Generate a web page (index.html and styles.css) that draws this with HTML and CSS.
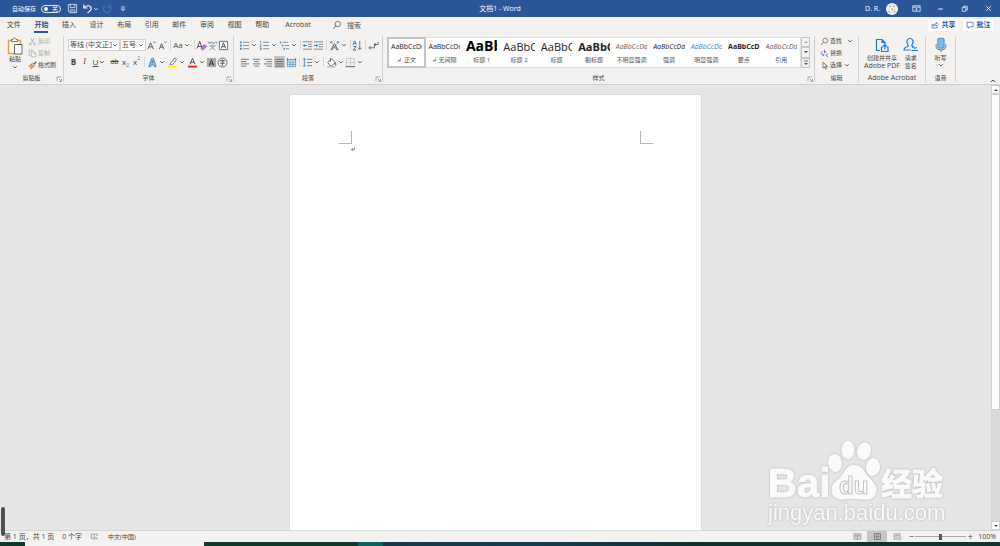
FILE: index.html
```html
<!DOCTYPE html>
<html lang="zh-CN">
<head>
    <meta charset="UTF-8">
    <title>文档1 - Word</title>
    <link rel="stylesheet" href="styles.css">
</head>
<body>
    <!-- 图标 -->
    <svg class="sprite" aria-hidden="true">
        <symbol id="caret" viewBox="0 0 6 6"><path d="M1.200 2.200L3 4l1.800-1.800" fill="none" stroke="currentColor" stroke-width=".8"/></symbol>
        <symbol id="launcher" viewBox="0 0 6 6"><path d="M1 5V1h4M3 3l2 2M5.500 3v2.500H3" fill="none" stroke="#777" stroke-width=".6"/></symbol>
        <symbol id="save" viewBox="0 0 12 12"><path d="M1.500 1.500h9v9H3l-1.500-1.500zM3.500 1.500v3.500h5v-3.500M3.500 10.500v-3h5v3M5.500 8.500v2" fill="none" stroke="#dce6f5" stroke-width=".9"/></symbol>
        <symbol id="undo" viewBox="0 0 12 12"><path d="M2 1.500v4h4M2 5.500C4 2 10 2 10 6c0 2-2 3.500-4 5" fill="none" stroke="currentColor" stroke-width="1.200"/></symbol>
        <symbol id="redo" viewBox="0 0 12 12"><path d="M9 1.500v3H6M3.500 3A4 4 0 1 0 9 4.500" fill="none" stroke="currentColor" stroke-width="1.200"/></symbol>
        <symbol id="custom" viewBox="0 0 6 6"><path d="M1 1h4M1.200 3l1.800 1.800L4.800 3z" fill="none" stroke="#fff" stroke-width=".7"/></symbol>
        <symbol id="display" viewBox="0 0 12 12"><path d="M2 3h8v6H2zM2 4.500h8M6 8.500V5.800M4.800 7L6 5.800 7.200 7" fill="none" stroke="#fff" stroke-width=".8"/></symbol>
        <symbol id="min" viewBox="0 0 12 12"><path d="M3.500 6.500h5" stroke="#fff"/></symbol>
        <symbol id="restore" viewBox="0 0 12 12"><path d="M3.500 5h4v4h-4zM5 5V3.500h4v4H7.500" fill="none" stroke="#fff" stroke-width=".8"/></symbol>
        <symbol id="close" viewBox="0 0 12 12"><path d="M3.500 3.500l5 5M8.500 3.500l-5 5" stroke="#fff" stroke-width=".9"/></symbol>
        <symbol id="search" viewBox="0 0 12 12"><circle cx="7" cy="4.800" r="3.200" fill="none" stroke="#555" stroke-width=".9"/><path d="M4.800 7L1.500 10.500" stroke="#555"/></symbol>
        <symbol id="share" viewBox="0 0 12 12"><path d="M4 5H1.500v5.500h8V8M4 8c0-3 2-4 4-4V2l3 3-3 3V6C6.500 6 5 6.500 4 8z" fill="none" stroke="#2b579a"/></symbol>
        <symbol id="comment" viewBox="0 0 12 12"><path d="M1.500 2h9v6.500H6L3.500 11V8.500h-2z" fill="none" stroke="#2b579a"/></symbol>
        <symbol id="paste" viewBox="0 0 16 18"><path d="M1.500 3.500h12v13h-12z" fill="#fafafa" stroke="#e9a33b" stroke-width="1.500"/><path d="M4.500 4.500v-2h1.500a1.500 1.500 0 0 1 3 0h1.500v2z" fill="#fff" stroke="#666" stroke-width=".9"/><path d="M7.500 7.500h7.500v9.500H7.500z" fill="#fff" stroke="#666"/></symbol>
        <symbol id="cut" viewBox="0 0 12 12"><path d="M3.500 1.500l4.500 7M8.500 1.500l-4.500 7" stroke="#999" stroke-width=".9"/><circle cx="3" cy="9.500" r="1.300" fill="none" stroke="#aaa" stroke-width=".9"/><circle cx="9" cy="9.500" r="1.300" fill="none" stroke="#aaa" stroke-width=".9"/></symbol>
        <symbol id="copy" viewBox="0 0 12 12"><path d="M4 8.500H1.500v-7h4L6 3M4.500 3.500H8L10.500 6v4.500h-6zM8 3.500V6h2.500" fill="none" stroke="#aaa" stroke-width=".9"/></symbol>
        <symbol id="painter" viewBox="0 0 12 12"><path d="M1 6l4-1.500 2.500 3L4 11z" fill="#f0a44b" stroke="#c97a20" stroke-width=".6"/><path d="M4.500 4l1.500-1.200 3 3.500-1.500 1.500z" fill="#fff" stroke="#555" stroke-width=".8"/><path d="M7.500 4.500L11 1" stroke="#555" stroke-width="1.800"/></symbol>
        <symbol id="grow" viewBox="0 0 11 12"><path d="M1.500 10L4.500 3l3 7M2.500 7.500h4" fill="none" stroke="#444" stroke-width=".9"/><path d="M7.500 3.200l1.300-1.400 1.300 1.400" fill="none" stroke="#2b7cc0" stroke-width=".9"/></symbol>
        <symbol id="shrink" viewBox="0 0 11 12"><path d="M2 10L4.500 4 7 10M3 7.800h3" fill="none" stroke="#444" stroke-width=".9"/><path d="M7.500 1.800l1.300 1.400 1.300-1.400" fill="none" stroke="#2b7cc0" stroke-width=".9"/></symbol>
        <symbol id="clear" viewBox="0 0 12 12"><path d="M1 9.500L4 1.500l3 8M2 7h4" fill="none" stroke="#444"/><path d="M5.500 8.500L9 5l2.500 2L8 10.500H6z" fill="#b977c9" stroke="#8f4aa5" stroke-width=".7"/></symbol>
        <symbol id="phonetic" viewBox="0 0 12 12"><path d="M1 1.500l1 2.500 1-2 1 2 1-2.500M5.500 3.500c0 1 2 1 2 0s-2-1-2 0M8.500 4V2M8.500 2.500c1-1 2-.5 2 0V4" fill="none" stroke="#777" stroke-width=".7"/><path d="M2.500 6.500h7M6 5.500v1M8 6.800L3 11M4 6.800L9 11" fill="none" stroke="#3a8ac8" stroke-width=".8"/></symbol>
        <symbol id="border-a" viewBox="0 0 12 12"><path d="M1.500 1.500h9v9h-9z" fill="#fff" stroke="#666"/><path d="M3.800 9L6 3l2.200 6M4.500 7.200h3" fill="none" stroke="#444"/></symbol>
        <symbol id="effect-a" viewBox="0 0 12 12"><path d="M2 10.500L5 1.500h2l3 9H8L7.400 8.500H4.600L4 10.500zM5.200 6.500h1.600L6 3.800z" fill="#9bcbee" stroke="#2f78b7" stroke-width=".9"/></symbol>
        <symbol id="highlight" viewBox="0 0 12 12"><path d="M3.500 7.500L8.500 1l2 1.500L6 8.500z" fill="#fff" stroke="#666" stroke-width=".9"/><path d="M1.500 8.500l2-1 1.500 1z" fill="#777"/><path d="M1 9.500h10v2H1z" fill="#fff200"/></symbol>
        <symbol id="color-a" viewBox="0 0 12 12"><path d="M3.200 8L6 1.500 8.800 8M4.200 5.800h3.600" fill="none" stroke="#444"/><path d="M1 9.500h10v2H1z" fill="#e81e25"/></symbol>
        <symbol id="shade-a" viewBox="0 0 12 12"><path d="M1 1h10v10H1z" fill="#aaa"/><path d="M3.500 9.500L6 3l2.500 6.500M4.200 7.500h3.600" fill="none" stroke="#333"/></symbol>
        <symbol id="circle-zi" viewBox="0 0 12 12"><circle cx="6" cy="6" r="4.900" fill="none" stroke="#555" stroke-width=".9"/><path d="M6 2.500v1M3.500 4.800V3.800h5v1M4.500 5.200h3L6 6.500v2.800H5M3.500 7h5" fill="none" stroke="#444" stroke-width=".8"/></symbol>
        <symbol id="bullets" viewBox="0 0 12 12"><path d="M1 1.500h2v2H1zM1 5h2v2H1zM1 8.500h2v2H1z" fill="#3a8ac8"/><path d="M4.500 2.500H11M4.500 6H11M4.500 9.500H11" stroke="#777" stroke-width=".9"/></symbol>
        <symbol id="numbers" viewBox="0 0 12 12"><path d="M1 1.500h1v2M1 5h1.500L1 7h1.500M1 8.500h1.500v2H1M1 9.500h1.500" fill="none" stroke="#3a8ac8" stroke-width=".8"/><path d="M4.500 2.500H11M4.500 6H11M4.500 9.500H11" stroke="#777" stroke-width=".9"/></symbol>
        <symbol id="levels" viewBox="0 0 12 12"><path d="M1 1.500h1.500v2H1zM3 5h1.500v2H3zM5 8.500h1.500v2H5z" fill="#3a8ac8"/><path d="M4 2.500h6M6 6h5M7.500 9.500H11" stroke="#777" stroke-width=".9"/></symbol>
        <symbol id="outdent" viewBox="0 0 12 12"><path d="M1 2h10M6.500 4.700H11M6.500 7.300H11M1 10h10" stroke="#777" stroke-width=".9"/><path d="M5.500 6H1.500M3 4.500L1.500 6 3 7.500" fill="none" stroke="#2b7cc0"/></symbol>
        <symbol id="indent" viewBox="0 0 12 12"><path d="M1 2h10M6.500 4.700H11M6.500 7.300H11M1 10h10" stroke="#777" stroke-width=".9"/><path d="M1 6h4M3.500 4.500L5 6 3.500 7.500" fill="none" stroke="#2b7cc0"/></symbol>
        <symbol id="asian" viewBox="0 0 12 12"><path d="M2 11l4-7 4 7M4 5l5 6M8 5l-5 6" fill="none" stroke="#555"/><path d="M1 2.500h3M8 2.500h3M2.200 1.200v2.600M9.800 1.200v2.600" stroke="#3a8ac8" stroke-width=".9"/></symbol>
        <symbol id="sort" viewBox="0 0 12 12"><path d="M1 5.500l2-4.500 2 4.500M1.800 4h2.400" fill="none" stroke="#2b7cc0" stroke-width=".9"/><path d="M1.200 7h3.500l-3.500 4h3.700" fill="none" stroke="#555" stroke-width=".9"/><path d="M8.500 1v9.500M6.500 8.500l2 2 2-2" fill="none" stroke="#555" stroke-width=".9"/></symbol>
        <symbol id="marks" viewBox="0 0 12 12"><path d="M1 8.500h6V4M3 6.500l-2 2 2 2M11 2v3H7M8.500 3.500L7 5l1.500 1.500" fill="none" stroke="#555" stroke-width=".9"/></symbol>
        <symbol id="left" viewBox="0 0 12 12"><path d="M2 2.500h9M2 5h6M2 7.500h9M2 10h6" stroke="#666" stroke-width=".9"/></symbol>
        <symbol id="center" viewBox="0 0 12 12"><path d="M2 2.500h8M3.500 5h5M2 7.500h8M3.500 10h5" stroke="#666" stroke-width=".9"/></symbol>
        <symbol id="right" viewBox="0 0 12 12"><path d="M1 2.500h9M4 5h6M1 7.500h9M4 10h6" stroke="#666" stroke-width=".9"/></symbol>
        <symbol id="justify" viewBox="0 0 12 12"><path d="M1.500 2.500h9M1.500 5h9M1.500 7.500h9M1.500 10h9" stroke="#555" stroke-width=".9"/></symbol>
        <symbol id="distribute" viewBox="0 0 12 12"><path d="M1.500 1v4M10.500 1v4M2 3h8" stroke="#2b7cc0"/><path d="M1.500 5.500h9v5h-9zM1.500 8h9M4.500 5.500v5M7.500 5.500v5" fill="none" stroke="#4b83b0" stroke-width=".8"/></symbol>
        <symbol id="spacing" viewBox="0 0 12 12"><path d="M2.500 1.500v9M1 3l1.500-1.500L4 3M1 9l1.500 1.500L4 9" fill="none" stroke="#2b7cc0" stroke-width=".9"/><path d="M5.500 2.500H11M5.500 6H11M5.500 9.500H11" stroke="#666" stroke-width=".9"/></symbol>
        <symbol id="fill" viewBox="0 0 12 12"><path d="M2 6l4-4 4 4-3.500 3.500h-2zM5 1v4" fill="#fff" stroke="#555" stroke-width=".9"/><path d="M10 6c1.500 2 1 3 .5 3S9.500 8 10 6z" fill="#3a8ac8" stroke="#3a8ac8"/><path d="M1 10h9v1.500H1z" fill="#bbb"/></symbol>
        <symbol id="borders" viewBox="0 0 12 12"><path d="M1.500 1.500h9v9M1.500 1.500v9M6 1.500v9M1.500 6h9" fill="none" stroke="#aaa" stroke-width=".8" stroke-dasharray="1 .6"/><path d="M1 10.500h10" stroke="#555"/></symbol>
        <symbol id="replace" viewBox="0 0 12 12"><path d="M6 1v4M6 3.500c2-1 3 1.500 0 1.500" fill="none" stroke="#a653b5" stroke-width="1.200"/><path d="M10.500 7c-3-1-3 3.500 0 3M4 3.500C1 4 1 7 3 8h2.500M4 6.500L5.500 8 4 9.500" fill="none" stroke="#3a8ac8" stroke-width="1.200"/></symbol>
        <symbol id="pointer" viewBox="0 0 12 12"><path d="M4 1.500v8l2-1.800 1.300 3 1.300-.6-1.300-2.800H10z" fill="#fff" stroke="#444" stroke-width=".9"/></symbol>
        <symbol id="pdf" viewBox="0 0 16 16"><path d="M6 13.500H2.500v-11H8L11 5.500v2M8 2.500v3h3" fill="none" stroke="#1d78d6" stroke-width="1.200"/><path d="M9 10H7.500v4.500H14V10h-1.500M10.800 12.500V7.500M9 9.300l1.800-1.800 1.800 1.800" fill="none" stroke="#1d78d6" stroke-width="1.200"/></symbol>
        <symbol id="sign" viewBox="0 0 16 16"><path d="M7.500 13H1c0-2 1.500-3 3.500-3.500C6 9 5 8 4.500 7 3 4 4.500 1.500 7 1.500S11 4 9.500 7C9 8 8 9.500 10 9.500" fill="none" stroke="#1d78d6" stroke-width="1.200"/><path d="M8.500 13.500H15M9 11l2-1.500.5 2L14 10.500" fill="none" stroke="#1d78d6"/></symbol>
        <symbol id="mic" viewBox="0 0 16 18"><rect x="4.500" y="1.500" width="7" height="11" rx="1" fill="#7dbdf0" stroke="#3a83c4"/><path d="M2.500 8v2.500c0 2.500 2 4 5.500 4s5.500-1.500 5.500-4V8M8 14.500V17" fill="none" stroke="#666"/></symbol>
        <symbol id="collapse" viewBox="0 0 6 6"><path d="M.8 4L3 2l2.200 2" fill="none" stroke="#444"/></symbol>
        <symbol id="return" viewBox="0 0 6 6"><path d="M4.500 1.500v2H1.500M2.800 2.200L1.500 3.500l1.300 1.300" fill="none" stroke="#666" stroke-width=".8"/></symbol>
        <symbol id="tri-up" viewBox="0 0 6 6"><path d="M1 4l2-2 2 2z" fill="currentColor"/></symbol>
        <symbol id="tri-down" viewBox="0 0 6 6"><path d="M1 2l2 2 2-2z" fill="currentColor"/></symbol>
        <symbol id="more" viewBox="0 0 6 6"><path d="M1 1h4" stroke="#555" stroke-width=".8"/><path d="M1 3l2 2 2-2z" fill="#555"/></symbol>
        <symbol id="proof" viewBox="0 0 12 12"><path d="M5.500 9.500c-1-1-3-1-4-1v-6c1 0 3 0 4 1 1-1 3-1 4-1v3M5.500 3.500v6" fill="none" stroke="#777" stroke-width=".9"/><path d="M7 7l3 3M10 7l-3 3" stroke="#777" stroke-width=".9"/></symbol>
        <symbol id="read" viewBox="0 0 12 12"><path d="M6 3C5 2 3 2.500 1.500 2.500v7C3 9.500 5 9 6 10c1-1 3-.5 4.500-.5v-7C9 2.500 7 2 6 3zv7M2.500 4.500H5M2.500 6.500H5M7 4.500h2.500M7 6.500h2.500" fill="none" stroke="#777" stroke-width=".9"/></symbol>
        <symbol id="print" viewBox="0 0 12 12"><path d="M2 2h8v8H2zM3.500 4h5M3.500 6h5M3.500 8h5" fill="none" stroke="#666" stroke-width=".9"/></symbol>
        <symbol id="web" viewBox="0 0 12 12"><path d="M6 9.500H1.500v-7h8V6M3 4.500h5M3 6.500h3" fill="none" stroke="#777" stroke-width=".9"/><circle cx="8.500" cy="8.500" r="2" fill="none" stroke="#777" stroke-width=".9"/></symbol>
    </svg>

    <header class="titlebar">
        <div class="quick">
            <label class="autosave">自动保存<input type="checkbox" class="toggle"><span class="off">关</span></label>
            <button class="quick-btn" aria-label="保存"><svg><use href="#save"/></svg></button>
            <button class="quick-btn undo" aria-label="撤消"><svg><use href="#undo"/></svg><svg class="caret"><use href="#caret"/></svg></button>
            <button class="quick-btn faded" aria-label="重复"><svg><use href="#redo"/></svg></button>
            <button class="quick-btn custom" aria-label="自定义"><svg class="caret"><use href="#custom"/></svg></button>
        </div>
        <div class="doc-title">文档1 - Word</div>
        <div class="window">
            <span class="user">D. R.</span>
            <svg class="avatar" viewBox="0 0 12 12"><circle cx="6" cy="6" r="6" fill="#f4f1ea"/><circle cx="6" cy="6.500" r="3" fill="#fff" stroke="#b7c9d4" stroke-width=".7"/><path d="M3.500 3.500L5 2.500M7 2.500l1.500 1M6 5v2h1.500" stroke="#8d7565" stroke-width=".8" fill="none"/><circle cx="3" cy="9" r=".8" fill="#6fae9b"/><circle cx="9" cy="9" r=".8" fill="#d99b66"/></svg>
            <button class="win-btn" aria-label="功能区显示选项"><svg><use href="#display"/></svg></button>
            <button class="win-btn" aria-label="最小化"><svg><use href="#min"/></svg></button>
            <button class="win-btn" aria-label="还原"><svg><use href="#restore"/></svg></button>
            <button class="win-btn" aria-label="关闭"><svg><use href="#close"/></svg></button>
        </div>
    </header>

    <nav class="tabbar">
        <div class="tabs">
            <button class="tab">文件</button>
            <button class="tab active">开始</button>
            <button class="tab">插入</button>
            <button class="tab">设计</button>
            <button class="tab">布局</button>
            <button class="tab">引用</button>
            <button class="tab">邮件</button>
            <button class="tab">审阅</button>
            <button class="tab">视图</button>
            <button class="tab">帮助</button>
        </div>
        <button class="tab acrobat">Acrobat</button>
        <label class="search"><svg><use href="#search"/></svg><input type="text" placeholder="搜索" aria-label="搜索"></label>
        <button class="share-btn"><svg><use href="#share"/></svg>共享</button>
        <button class="share-btn"><svg><use href="#comment"/></svg>批注</button>
    </nav>

    <div class="ribbon">
        <section class="group clipboard">
            <div class="group-body">
                <button class="big paste"><svg class="icon-lg"><use href="#paste"/></svg><span>粘贴</span><svg class="caret"><use href="#caret"/></svg></button>
                <div class="stack">
                    <button class="line faded"><svg><use href="#cut"/></svg>剪切</button>
                    <button class="line faded"><svg><use href="#copy"/></svg>复制</button>
                    <button class="line"><svg><use href="#painter"/></svg>格式刷</button>
                </div>
            </div>
            <div class="group-name">剪贴板<svg class="launcher"><use href="#launcher"/></svg></div>
        </section>

        <section class="group font">
            <div class="group-body rows">
                <div class="row">
                    <span class="combo"><select class="font-name" aria-label="字体"><option>等线 (中文正文)</option></select><svg class="caret"><use href="#caret"/></svg></span>
                    <span class="combo"><select class="font-size" aria-label="字号"><option>五号</option></select><svg class="caret"><use href="#caret"/></svg></span>
                    <button class="tool" aria-label="增大字号"><svg><use href="#grow"/></svg></button>
                    <button class="tool" aria-label="减小字号"><svg><use href="#shrink"/></svg></button>
                    <i class="sep"></i>
                    <button class="tool wide drop">Aa<svg class="caret"><use href="#caret"/></svg></button>
                    <i class="sep"></i>
                    <button class="tool" aria-label="清除格式"><svg><use href="#clear"/></svg></button>
                    <button class="tool" aria-label="拼音指南"><svg><use href="#phonetic"/></svg></button>
                    <button class="tool" aria-label="字符边框"><svg><use href="#border-a"/></svg></button>
                </div>
                <div class="row">
                    <button class="tool"><b>B</b></button>
                    <button class="tool italic">I</button>
                    <button class="tool drop"><u>U</u><svg class="caret"><use href="#caret"/></svg></button>
                    <button class="tool"><s>ab</s></button>
                    <button class="tool">x<sub>2</sub></button>
                    <button class="tool">x<sup>2</sup></button>
                    <i class="sep"></i>
                    <button class="tool drop" aria-label="文本效果"><svg><use href="#effect-a"/></svg><svg class="caret"><use href="#caret"/></svg></button>
                    <button class="tool wide drop" aria-label="突出显示"><svg><use href="#highlight"/></svg><svg class="caret"><use href="#caret"/></svg></button>
                    <button class="tool wide drop" aria-label="字体颜色"><svg><use href="#color-a"/></svg><svg class="caret"><use href="#caret"/></svg></button>
                    <button class="tool" aria-label="字符底纹"><svg><use href="#shade-a"/></svg></button>
                    <button class="tool" aria-label="带圈字符"><svg><use href="#circle-zi"/></svg></button>
                </div>
            </div>
            <div class="group-name">字体<svg class="launcher"><use href="#launcher"/></svg></div>
        </section>

        <section class="group paragraph">
            <div class="group-body rows">
                <div class="row">
                    <button class="tool wide drop" aria-label="项目符号"><svg><use href="#bullets"/></svg><svg class="caret"><use href="#caret"/></svg></button>
                    <button class="tool wide drop" aria-label="编号"><svg><use href="#numbers"/></svg><svg class="caret"><use href="#caret"/></svg></button>
                    <button class="tool wide drop" aria-label="多级列表"><svg><use href="#levels"/></svg><svg class="caret"><use href="#caret"/></svg></button>
                    <i class="sep"></i>
                    <button class="tool" aria-label="减少缩进"><svg><use href="#outdent"/></svg></button>
                    <button class="tool" aria-label="增加缩进"><svg><use href="#indent"/></svg></button>
                    <i class="sep"></i>
                    <button class="tool wide drop" aria-label="中文版式"><svg><use href="#asian"/></svg><svg class="caret"><use href="#caret"/></svg></button>
                    <i class="sep"></i>
                    <button class="tool" aria-label="排序"><svg><use href="#sort"/></svg></button>
                    <i class="sep"></i>
                    <button class="tool wide" aria-label="显示编辑标记"><svg><use href="#marks"/></svg></button>
                </div>
                <div class="row">
                    <button class="tool wide" aria-label="左对齐"><svg><use href="#left"/></svg></button>
                    <button class="tool wide" aria-label="居中"><svg><use href="#center"/></svg></button>
                    <button class="tool wide" aria-label="右对齐"><svg><use href="#right"/></svg></button>
                    <button class="tool pressed" aria-label="两端对齐"><svg><use href="#justify"/></svg></button>
                    <button class="tool wide" aria-label="分散对齐"><svg><use href="#distribute"/></svg></button>
                    <i class="sep"></i>
                    <button class="tool drop" aria-label="行距"><svg><use href="#spacing"/></svg><svg class="caret"><use href="#caret"/></svg></button>
                    <i class="sep"></i>
                    <button class="tool drop" aria-label="底纹"><svg><use href="#fill"/></svg><svg class="caret"><use href="#caret"/></svg></button>
                    <button class="tool drop" aria-label="边框"><svg><use href="#borders"/></svg><svg class="caret"><use href="#caret"/></svg></button>
                </div>
            </div>
            <div class="group-name">段落<svg class="launcher"><use href="#launcher"/></svg></div>
        </section>

        <section class="group styles">
            <div class="group-body">
                <div class="gallery">
                    <button class="style selected"><span class="sample">AaBbCcDd</span><span class="style-name">↲ 正文</span></button>
                    <button class="style"><span class="sample">AaBbCcDd</span><span class="style-name">↲ 无间隔</span></button>
                    <button class="style"><span class="sample huge">AaBb</span><span class="style-name">标题 1</span></button>
                    <button class="style"><span class="sample large">AaBbC</span><span class="style-name">标题 2</span></button>
                    <button class="style"><span class="sample large">AaBbC</span><span class="style-name">标题</span></button>
                    <button class="style"><span class="sample large bold">AaBbC</span><span class="style-name">副标题</span></button>
                    <button class="style"><span class="sample slant gray">AaBbCcDd</span><span class="style-name">不明显强调</span></button>
                    <button class="style"><span class="sample slant">AaBbCcDd</span><span class="style-name">强调</span></button>
                    <button class="style"><span class="sample slant blue">AaBbCcDd</span><span class="style-name">明显强调</span></button>
                    <button class="style"><span class="sample bold">AaBbCcD</span><span class="style-name">要点</span></button>
                    <button class="style"><span class="sample slant gray">AaBbCcDd</span><span class="style-name">引用</span></button>
                </div>
                <div class="gallery-nav">
                    <button class="faded" aria-label="上一行"><svg class="caret"><use href="#tri-up"/></svg></button>
                    <button aria-label="下一行"><svg class="caret"><use href="#tri-down"/></svg></button>
                    <button aria-label="其他"><svg class="caret"><use href="#more"/></svg></button>
                </div>
            </div>
            <div class="group-name">样式<svg class="launcher"><use href="#launcher"/></svg></div>
        </section>

        <section class="group editing">
            <div class="group-body">
                <div class="stack">
                    <button class="line"><svg><use href="#search"/></svg>查找<svg class="caret far"><use href="#caret"/></svg></button>
                    <button class="line"><svg><use href="#replace"/></svg>替换</button>
                    <button class="line"><svg><use href="#pointer"/></svg>选择<svg class="caret"><use href="#caret"/></svg></button>
                </div>
            </div>
            <div class="group-name">编辑</div>
        </section>

        <section class="group adobe">
            <div class="group-body">
                <button class="big"><svg class="icon-md"><use href="#pdf"/></svg><span>创建并共享</span><span class="latin">Adobe PDF</span></button>
                <button class="big"><svg class="icon-md"><use href="#sign"/></svg><span>请求</span><span>签名</span></button>
            </div>
            <div class="group-name latin">Adobe Acrobat</div>
        </section>

        <section class="group voice">
            <div class="group-body">
                <button class="big"><svg class="icon-md"><use href="#mic"/></svg><span>听写</span><svg class="caret"><use href="#caret"/></svg></button>
            </div>
            <div class="group-name">语音</div>
        </section>
        <button class="collapse" aria-label="折叠功能区"><svg class="caret"><use href="#collapse"/></svg></button>
    </div>

    <main class="workspace">
        <div class="canvas">
            <article class="page">
                <div class="crop-marks"><i class="crop crop-left"></i><i class="crop crop-right"></i></div>
                <p class="text"><svg class="caret"><use href="#return"/></svg></p>
            </article>
        </div>
        <div class="scrollbar">
            <button aria-label="向上滚动"><svg class="caret"><use href="#tri-up"/></svg></button>
            <div class="track"><div class="thumb"></div></div>
            <button aria-label="向下滚动"><svg class="caret"><use href="#tri-down"/></svg></button>
        </div>
        <div class="side-handle"></div>
        <svg class="watermark" viewBox="0 0 184 92">
            <text x="4" y="60" class="wm-bai">Bai</text>
            <g class="wm-paw">
                <ellipse cx="71" cy="26" rx="6.500" ry="8.500" transform="rotate(-8 71 26)"/>
                <ellipse cx="84" cy="13" rx="6" ry="9"/>
                <ellipse cx="100" cy="14" rx="6.500" ry="8.500" transform="rotate(12 100 14)"/>
                <ellipse cx="109" cy="30" rx="6.500" ry="8.500" transform="rotate(6 109 30)"/>
                <path d="M90 28c7 0 10 7 14 12 4 4 9 8 8 14-1 8-8 9-14 8-5-1-11-1-16 0-7 1-14-1-14-9 0-6 5-9 9-13 4-5 6-12 13-12z"/>
            </g>
            <text x="75" y="57" class="wm-du">du</text>
            <text x="117" y="58" class="wm-cn">经验</text>
            <text x="4" y="83" class="wm-url">jingyan.baidu.com</text>
        </svg>
    </main>

    <footer class="statusbar">
        <span class="pages">第 1 页，共 1 页</span>
        <span class="words">0 个字</span>
        <button class="view proof" aria-label="校对"><svg><use href="#proof"/></svg></button>
        <span class="language">中文(中国)</span>
        <button class="view" aria-label="阅读视图"><svg><use href="#read"/></svg></button>
        <button class="view on" aria-label="页面视图"><svg><use href="#print"/></svg></button>
        <button class="view" aria-label="Web 版式视图"><svg><use href="#web"/></svg></button>
        <button class="zoom-btn">−</button>
        <input type="range" class="zoom" min="0" max="100" value="50" aria-label="缩放">
        <button class="zoom-btn">+</button>
        <span class="percent">100%</span>
    </footer>
    <div class="taskbar">
        <i class="task-start"></i>
        <i class="task-search"></i>
        <i class="task-apps"></i>
        <i class="task-active"></i>
        <div class="task-rest">15:41</div>
    </div>
</body>
</html>
```
FILE: styles.css
```css
* {
    box-sizing: border-box;
}
body {
    margin: 0;
    height: 100vh;
    display: flex;
    flex-direction: column;
    overflow: hidden;
    font: 6px/8px "Open Sans", "Noto Sans CJK SC", sans-serif;
    color: #444;
    background: #e6e6e6;
}
button, input, select {
    font: inherit;
    color: inherit;
    background: none;
    border: 0;
    margin: 0;
    padding: 0;
}
svg {
    width: 11px;
    height: 11px;
    flex: none;
    display: block;
}
.caret, .launcher {
    width: 6px;
    height: 6px;
}
.sprite {
    display: none;
}
.latin {
    font-size: 7px;
}
.faded {
    color: #aaa;
}

/* 标题栏 */
.titlebar {
    display: grid;
    grid-template-columns: 1fr auto 1fr;
    align-items: center;
    height: 17px;
    background: #2b579a;
    color: #fff;
}
.quick, .window {
    display: flex;
    align-items: center;
}
.quick {
    padding-left: 12px;
    gap: 7px;
}
.autosave {
    position: relative;
    display: flex;
    align-items: center;
    gap: 5px;
    margin-right: -1px;
}
.toggle {
    appearance: none;
    width: 20px;
    height: 8px;
    border: 1px solid #dce6f5;
    border-radius: 4px;
    display: flex;
    align-items: center;
    padding-left: 2px;
}
.toggle::before {
    content: "";
    width: 4px;
    height: 4px;
    border-radius: 50%;
    background: #fff;
}
.off {
    position: absolute;
    right: 3px;
}
.quick-btn {
    display: flex;
    align-items: center;
}
.quick-btn.faded {
    color: #4f75b0;
}
.undo {
    margin-left: -3px;
}
.quick-btn.faded {
    margin-left: -4px;
}
.doc-title {
    font-size: 7px;
}
.window {
    justify-content: flex-end;
}
.user {
    font-size: 7px;
    margin-right: 6px;
}
.avatar {
    width: 12px;
    height: 12px;
    margin-right: 6px;
}
.win-btn {
    width: 24px;
    height: 17px;
    display: grid;
    place-items: center;
}

/* 选项卡 */
.tabbar {
    display: flex;
    align-items: center;
    height: 16px;
    padding-right: 7px;
    background: #f3f2f1;
    font-size: 7px;
}
.tabs {
    display: flex;
    width: 276px;
}
.tab {
    flex: 1;
    height: 16px;
    display: flex;
    flex-direction: column;
    align-items: center;
    padding-top: 4px;
}
.active {
    color: #2b579a;
    font-weight: bold;
}
.active::after {
    content: "";
    width: 14px;
    height: 2px;
    margin-top: 2px;
    background: #2b579a;
}
.acrobat {
    flex: none;
    width: 44px;
}
.search {
    display: flex;
    align-items: center;
    gap: 5px;
    margin-left: 12px;
    margin-right: auto;
}
.search svg {
    width: 10px;
    height: 10px;
}
.search input {
    width: 60px;
    height: 10px;
}
.search input::placeholder {
    color: #555;
}
.share-btn {
    display: flex;
    align-items: center;
    justify-content: center;
    gap: 3px;
    width: 30px;
    height: 12px;
    margin-left: 5px;
    background: #fff;
    color: #2b579a;
    font-weight: bold;
}
.share-btn svg {
    width: 8px;
    height: 8px;
}

/* 功能区 */
.ribbon {
    display: flex;
    height: 52px;
    background: #f3f2f1;
    border-bottom: 1px solid #cfcfcf;
}
.group {
    display: flex;
    flex-direction: column;
    flex: none;
    margin: 3px 0 2px;
    border-right: 1px solid #d2d0ce;
}
.group-body {
    flex: 1;
    display: flex;
}
.group-name {
    position: relative;
    height: 8px;
    text-align: center;
}
.launcher {
    position: absolute;
    right: 1px;
    top: 2px;
}
.big {
    display: flex;
    flex-direction: column;
    align-items: center;
    padding-top: 1px;
}
.icon-lg {
    width: 16px;
    height: 18px;
}
.icon-md {
    width: 16px;
    height: 16px;
    margin-bottom: 1px;
}
.stack {
    display: flex;
    flex-direction: column;
    gap: 4px;
    padding-top: 1px;
}
.line {
    display: flex;
    align-items: center;
    gap: 1px;
    height: 8px;
}
.line svg {
    width: 9px;
    height: 9px;
}
.line .caret {
    width: 6px;
    height: 6px;
    margin-left: 1px;
}
.line .far {
    margin-left: 4px;
}
.clipboard {
    width: 64px;
}
.clipboard .group-body {
    padding-left: 7px;
    gap: 5px;
}
.paste .caret {
    margin-top: 1px;
}
.rows {
    flex-direction: column;
    gap: 5px;
    padding-top: 3px;
}
.row {
    display: flex;
    height: 12px;
    align-items: center;
}
.font {
    width: 170px;
}
.font .group-body {
    padding-left: 4px;
    padding-right: 4px;
}
.paragraph {
    width: 149px;
}
.paragraph .group-body {
    padding-left: 4px;
    padding-right: 3px;
}
.combo {
    display: flex;
    align-items: center;
    height: 12px;
    background: #fff;
    border: 1px solid #d2d0ce;
    padding-right: 1px;
    font-size: 7px;
}
.combo select {
    appearance: none;
    height: 10px;
    padding-left: 1px;
}
.font-name {
    width: 43px;
}
.font-size {
    width: 17px;
}
.tool {
    display: flex;
    align-items: center;
    justify-content: center;
    width: 11px;
    height: 12px;
    font-size: 8px;
}
.tool .caret {
    margin: 0 1px;
}
.tool sub, .tool sup {
    font-size: 5px;
    line-height: 5px;
    color: #2b7cc0;
}
.tool sub {
    align-self: flex-end;
}
.tool sup {
    align-self: flex-start;
}
.tool s {
    font-size: 7px;
}
.italic {
    font-family: "Liberation Serif", serif;
    font-style: italic;
}
.wide {
    width: 12px;
}
.drop {
    width: 19px;
}
.wide.drop {
    width: 20px;
}
.pressed {
    background: #c8c6c4;
}
.sep {
    flex: 1;
    max-width: 5px;
    height: 10px;
    background: linear-gradient(#d8d6d4, #d8d6d4) center / 1px 100% no-repeat;
}

/* 样式库 */
.styles {
    flex: 0 1 432px;
    min-width: 0;
}
.styles .group-body {
    padding: 1px 4px 6px 4px;
}
.gallery {
    flex: 1;
    min-width: 0;
    display: flex;
    background: #fff;
    border: 1px solid #e1dfdd;
}
.style {
    flex: 1;
    min-width: 0;
    display: flex;
    flex-direction: column;
    padding: 0 3px;
}
.selected {
    outline: 2px solid #c3c3c3;
    outline-offset: -1px;
}
.sample {
    display: block;
    width: 100%;
    height: 18px;
    overflow: hidden;
    white-space: nowrap;
    text-align: left;
    font-size: 7px;
    line-height: 18px;
    color: #222;
}
.style-name {
    align-self: center;
    white-space: nowrap;
    color: #555;
}
.large {
    font-size: 11px;
}
.huge {
    font-size: 14px;
    line-height: 16px;
    font-weight: bold;
    color: #000;
}
.bold {
    font-weight: bold;
}
.slant {
    font-style: italic;
}
.sample.gray {
    color: #666;
}
.sample.blue {
    color: #4a86c0;
}
.gallery-nav {
    display: flex;
    flex-direction: column;
    width: 9px;
}
.gallery-nav button {
    flex: 1;
    display: grid;
    place-items: center;
    border: 1px solid #c8c6c4;
}
.editing {
    width: 44px;
}
.editing .group-body {
    padding-left: 5px;
}
.adobe {
    width: 67px;
}
.adobe .group-body {
    padding-left: 5px;
    gap: 3px;
}
.voice {
    width: 30px;
}
.voice .group-body {
    justify-content: center;
}
.collapse {
    align-self: flex-end;
    margin-left: auto;
    margin-right: 4px;
}

/* 文档区 */
.workspace {
    position: relative;
    flex: 1;
    min-height: 0;
    display: flex;
}
.canvas {
    flex: 1;
    display: flex;
    justify-content: center;
    padding-top: 10px;
}
.page {
    width: 411px;
    padding: 36px 48px 0 49px;
    background: #fff;
    box-shadow: 0 0 0 1px #dcdcdc;
}
.crop-marks {
    display: flex;
    justify-content: space-between;
}
.crop {
    width: 13px;
    height: 13px;
    border-bottom: 1px solid #b5b5b5;
}
.crop-left {
    border-right: 1px solid #b5b5b5;
}
.crop-right {
    border-left: 1px solid #b5b5b5;
}
.text {
    margin: 2px 0 0 11px;
}
.scrollbar {
    width: 9px;
    display: flex;
    flex-direction: column;
    background: #dadada;
}
.scrollbar button {
    height: 9px;
    display: grid;
    place-items: center;
    background: #fff;
    border: 1px solid #cfcfcf;
}
.track {
    flex: 1;
}
.thumb {
    height: 74%;
    background: #fff;
    border: 1px solid #cfcfcf;
}
.side-handle {
    position: absolute;
    left: 1px;
    bottom: -6px;
    width: 4px;
    height: 29px;
    border-radius: 2px;
    background: #505050;
    z-index: 1;
}
.watermark {
    position: absolute;
    right: 52px;
    bottom: 1px;
    width: 184px;
    height: 92px;
    fill: #fafafa;
    stroke: #fafafa;
    stroke-width: 1px;
    filter: drop-shadow(0 0 1px #b0b0b0);
}
.wm-bai {
    font: bold 40px "Liberation Sans", sans-serif;
}
.wm-du {
    font: bold 24px "Liberation Sans", sans-serif;
    stroke: #c4c4c4;
}
.wm-cn {
    font: bold 31px "Noto Sans CJK SC", sans-serif;
}
.wm-url {
    font: 22px "Liberation Sans", sans-serif;
    stroke: none;
}

/* 状态栏 */
.statusbar {
    display: flex;
    align-items: center;
    height: 12px;
    padding: 0 4px;
    background: #f3f2f1;
    border-top: 1px solid #d4d4d4;
}
.pages, .words {
    font-size: 7px;
}
.words {
    margin-left: 8px;
}
.proof {
    margin-left: 2px;
}
.language {
    margin-left: 4px;
    margin-right: auto;
}
.view {
    width: 20px;
    height: 11px;
    display: grid;
    place-items: center;
}
.view svg {
    width: 9px;
    height: 9px;
}
.on {
    background: #c8c6c4;
}
.zoom-btn {
    width: 8px;
    font-size: 9px;
}
.zoom {
    appearance: none;
    width: 51px;
    height: 10px;
    background: linear-gradient(#aaa, #aaa) center / 100% 1px no-repeat;
}
.zoom::-webkit-slider-thumb {
    appearance: none;
    width: 3px;
    height: 6px;
    background: #555;
}
.percent {
    margin-left: 4px;
    font-size: 7px;
}
.taskbar {
    display: flex;
    flex: none;
    height: 4px;
    overflow: hidden;
}
.task-start, .task-apps {
    background: #10392d;
}
.task-start {
    width: 25px;
}
.task-search {
    width: 179px;
    background: #f3f3f3;
}
.task-apps {
    width: 154px;
}
.task-active {
    width: 25px;
    background: #0d625e;
}
.task-rest {
    flex: 1;
    padding-right: 37px;
    text-align: right;
    color: #fff;
    line-height: 12px;
    background: linear-gradient(90deg, #17384a, #143f52 25%, #10302f 50%, #12332f);
}
```
